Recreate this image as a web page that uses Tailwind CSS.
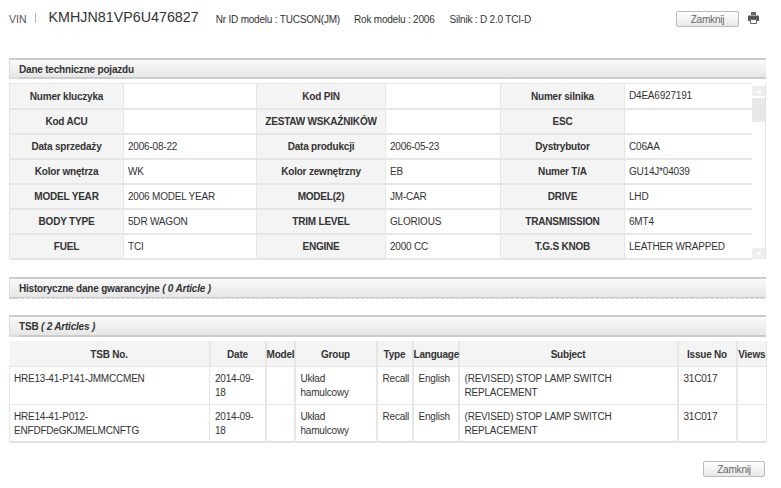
<!DOCTYPE html>
<html lang="en">
  <head>
    <meta charset="UTF-8" />
    <title>Dane techniczne pojazdu</title>
    <script src="https://cdn.jsdelivr.net/npm/@tailwindcss/browser@4"></script>
  </head>
  <body class="bg-white font-['Liberation_Sans',Arial,sans-serif] text-[10px] tracking-[-0.2px] text-[#333] overflow-hidden">
    <div class="w-[781px] h-[488px] pl-[9px] pr-[15px] flex flex-col">
      <!-- top bar -->
      <div class="h-[58px] flex items-start pt-[9px] pr-[5px]">
        <span class="text-[#555] text-[10.500px] tracking-normal mt-[3px]">VIN</span>
        <span class="w-px h-[10px] bg-[#bbb] ml-[8px] mt-[4px]"></span>
        <span class="ml-[13px] text-[14.3px] tracking-normal leading-[17px] text-[#333]">KMHJN81VP6U476827</span>
        <span class="ml-[17px] mt-[3px]">Nr ID modelu : TUCSON(JM)</span>
        <span class="ml-[14px] mt-[3px]">Rok modelu : 2006</span>
        <span class="ml-[15px] mt-[3px]">Silnik : D 2.0 TCI-D</span>
        <button class="ml-auto mt-[2px] w-[63px] h-[16px] border border-[#bbb] bg-gradient-to-b from-white to-[#e8e8e8] rounded-[2px] text-[#666]">Zamknij</button>
        <svg class="ml-[9px] mr-[2px] mt-[3px]" width="11" height="12" viewBox="0 0 11 12">
          <path fill="#666" d="M3 0h5v3H3z" />
          <path fill="#555" d="M1 3.500h9a1 1 0 0 1 1 1V9H9V7H2v2H0V4.500a1 1 0 0 1 1-1z" />
          <path fill="#fff" stroke="#666" d="M2.500 7.500h6v4h-6z" />
        </svg>
      </div>

      <!-- vehicle data -->
      <div class="h-[21px] relative border-t-2 border-b-2 border-l border-t-[#ccc] border-b-[#ccc] border-l-[#ddd] bg-gradient-to-b from-[#fafafa] to-[#e6e6e6] flex items-center pl-[9px] pt-[2px] font-bold">
        Dane techniczne pojazdu
        <span class="absolute left-0 bottom-[-2px] w-[9px] h-[2px] bg-[#ddd]"></span>
      </div>
      <div class="mt-[4px] h-[177px] relative overflow-hidden border-r border-[#e2e2e2]">
        <table class="table-fixed border-collapse w-[743px] border-t border-[#e6e6e6]">
          <colgroup>
            <col class="w-[114px]" /><col class="w-[133px]" /><col class="w-[129px]" /><col class="w-[115px]" /><col class="w-[124px]" /><col class="w-[128px]" />
          </colgroup>
          <tbody>
            <tr class="h-[25px] border-b-2 border-[#e6e6e6]"><th class="bg-[#f4f4f4] border-x border-[#e6e6e6] pt-[1px]">Numer kluczyka</th><td class="pl-[4px]"></td><th class="bg-[#f4f4f4] border-x border-[#e6e6e6] pt-[1px]">Kod PIN</th><td class="pl-[4px]"></td><th class="bg-[#f4f4f4] border-x border-[#e6e6e6] pt-[1px]">Numer silnika</th><td class="pl-[4px]">D4EA6927191</td></tr>
            <tr class="h-[25px] border-b-2 border-[#e6e6e6]"><th class="bg-[#f4f4f4] border-x border-[#e6e6e6] pt-[1px]">Kod ACU</th><td class="pl-[4px]"></td><th class="bg-[#f4f4f4] border-x border-[#e6e6e6] pt-[1px]">ZESTAW WSKAŹNIKÓW</th><td class="pl-[4px]"></td><th class="bg-[#f4f4f4] border-x border-[#e6e6e6] pt-[1px]">ESC</th><td class="pl-[4px]"></td></tr>
            <tr class="h-[25px] border-b-2 border-[#e6e6e6]"><th class="bg-[#f4f4f4] border-x border-[#e6e6e6] pt-[1px]">Data sprzedaży</th><td class="pl-[4px]">2006-08-22</td><th class="bg-[#f4f4f4] border-x border-[#e6e6e6] pt-[1px]">Data produkcji</th><td class="pl-[4px]">2006-05-23</td><th class="bg-[#f4f4f4] border-x border-[#e6e6e6] pt-[1px]">Dystrybutor</th><td class="pl-[4px]">C06AA</td></tr>
            <tr class="h-[25px] border-b-2 border-[#e6e6e6]"><th class="bg-[#f4f4f4] border-x border-[#e6e6e6] pt-[1px]">Kolor wnętrza</th><td class="pl-[4px]">WK</td><th class="bg-[#f4f4f4] border-x border-[#e6e6e6] pt-[1px]">Kolor zewnętrzny</th><td class="pl-[4px]">EB</td><th class="bg-[#f4f4f4] border-x border-[#e6e6e6] pt-[1px]">Numer T/A</th><td class="pl-[4px]">GU14J*04039</td></tr>
            <tr class="h-[25px] border-b-2 border-[#e6e6e6]"><th class="bg-[#f4f4f4] border-x border-[#e6e6e6] pt-[1px]">MODEL YEAR</th><td class="pl-[4px]">2006 MODEL YEAR</td><th class="bg-[#f4f4f4] border-x border-[#e6e6e6] pt-[1px]">MODEL(2)</th><td class="pl-[4px]">JM-CAR</td><th class="bg-[#f4f4f4] border-x border-[#e6e6e6] pt-[1px]">DRIVE</th><td class="pl-[4px]">LHD</td></tr>
            <tr class="h-[25px] border-b-2 border-[#e6e6e6]"><th class="bg-[#f4f4f4] border-x border-[#e6e6e6] pt-[1px]">BODY TYPE</th><td class="pl-[4px]">5DR WAGON</td><th class="bg-[#f4f4f4] border-x border-[#e6e6e6] pt-[1px]">TRIM LEVEL</th><td class="pl-[4px]">GLORIOUS</td><th class="bg-[#f4f4f4] border-x border-[#e6e6e6] pt-[1px]">TRANSMISSION</th><td class="pl-[4px]">6MT4</td></tr>
            <tr class="h-[25px] border-b-2 border-[#e6e6e6]"><th class="bg-[#f4f4f4] border-x border-[#e6e6e6] pt-[1px]">FUEL</th><td class="pl-[4px]">TCI</td><th class="bg-[#f4f4f4] border-x border-[#e6e6e6] pt-[1px]">ENGINE</th><td class="pl-[4px]">2000 CC</td><th class="bg-[#f4f4f4] border-x border-[#e6e6e6] pt-[1px]">T.G.S KNOB</th><td class="pl-[4px]">LEATHER WRAPPED</td></tr>
          </tbody>
        </table>
        <!-- scrollbar -->
        <div class="absolute top-0 right-0 w-[13px] h-full flex flex-col bg-white pt-[3px] pb-[1px]">
          <div class="h-[10px] bg-[#eee] flex items-center justify-center"><span class="border-x-[3px] border-x-transparent border-b-[3px] border-b-white"></span></div>
          <div class="h-[24px] mt-[2px] bg-[#e8e8e8]"></div>
          <div class="mt-auto h-[11px] bg-[#eee] flex items-center justify-center"><span class="border-x-[3px] border-x-transparent border-t-[3px] border-t-white"></span></div>
        </div>
      </div>

      <!-- warranty -->
      <div class="mt-[17px] h-[22px] relative border-t-2 border-b-2 border-l border-t-[#ccc] border-b-[#ccc] border-l-[#ddd] bg-gradient-to-b from-[#fafafa] to-[#e6e6e6] flex items-center pl-[9px] pt-[1px] font-bold">
        Historyczne dane gwarancyjne&nbsp;<i>( 0 Article )</i>
        <span class="absolute left-[9px] right-0 bottom-[-2px] border-b border-dashed border-[#eee]"></span>
      </div>

      <!-- tsb -->
      <div class="mt-[16px] h-[22px] relative border-t-2 border-b-2 border-l border-t-[#ccc] border-b-[#ccc] border-l-[#ddd] bg-gradient-to-b from-[#fafafa] to-[#e6e6e6] flex items-center pl-[9px] pt-[1px] font-bold">
        TSB&nbsp;<i>( 2 Articles )</i>
        <span class="absolute left-0 bottom-[-2px] w-[9px] h-[2px] bg-[#ddd]"></span>
      </div>
      <table class="mt-[4px] table-fixed border-collapse w-[757px] border-b-2 border-[#e0e0e0]">
        <colgroup>
          <col class="w-[200px]" /><col class="w-[56px]" /><col class="w-[29px]" /><col class="w-[82px]" /><col class="w-[36px]" /><col class="w-[46px]" /><col class="w-[219px]" /><col class="w-[59px]" /><col class="w-[30px]" />
        </colgroup>
        <thead>
          <tr class="h-[25px] bg-[#f4f4f4] border-b border-[#e6e6e6] font-bold">
            <th class="border-r-2 border-[#e6e6e6] pt-[3px]">TSB No.</th><th class="border-r-2 border-[#e6e6e6] pt-[3px]">Date</th><th class="border-r-2 border-[#e6e6e6] pt-[3px]">Model</th><th class="border-r-2 border-[#e6e6e6] pt-[3px]">Group</th><th class="border-r-2 border-[#e6e6e6] pt-[3px]">Type</th><th class="border-r-2 border-[#e6e6e6] pt-[3px]">Language</th><th class="border-r-2 border-[#e6e6e6] pt-[3px]">Subject</th><th class="border-r-2 border-[#e6e6e6] pt-[3px]">Issue No</th><th class="border-r border-[#e6e6e6] pt-[3px]">Views</th>
          </tr>
        </thead>
        <tbody class="leading-[14px] align-top">
          <tr class="h-[38px] border-b border-[#e6e6e6]">
            <td class="border-x border-[#e6e6e6] px-[4px] pt-[5px]">HRE13-41-P141-JMMCCMEN</td><td class="border-r-2 border-[#e6e6e6] pl-[5px] pr-[3px] pt-[5px]">2014-09-18</td><td class="border-r-2 border-[#e6e6e6]"></td><td class="border-r-2 border-[#e6e6e6] pl-[5px] pr-[3px] pt-[5px]">Układ hamulcowy</td><td class="border-r-2 border-[#e6e6e6] pl-[5px] pr-[3px] pt-[5px]">Recall</td><td class="border-r-2 border-[#e6e6e6] pl-[5px] pr-[3px] pt-[5px]">English</td><td class="border-r-2 border-[#e6e6e6] pl-[5px] pr-[3px] pt-[5px]">(REVISED) STOP LAMP SWITCH REPLACEMENT</td><td class="border-r-2 border-[#e6e6e6] pl-[5px] pr-[3px] pt-[5px]">31C017</td><td class="border-r border-[#e6e6e6]"></td>
          </tr>
          <tr class="h-[38px]">
            <td class="border-x border-[#e6e6e6] px-[4px] pt-[5px]">HRE14-41-P012-<br />ENFDFDeGKJMELMCNFTG</td><td class="border-r-2 border-[#e6e6e6] pl-[5px] pr-[3px] pt-[5px]">2014-09-18</td><td class="border-r-2 border-[#e6e6e6]"></td><td class="border-r-2 border-[#e6e6e6] pl-[5px] pr-[3px] pt-[5px]">Układ hamulcowy</td><td class="border-r-2 border-[#e6e6e6] pl-[5px] pr-[3px] pt-[5px]">Recall</td><td class="border-r-2 border-[#e6e6e6] pl-[5px] pr-[3px] pt-[5px]">English</td><td class="border-r-2 border-[#e6e6e6] pl-[5px] pr-[3px] pt-[5px]">(REVISED) STOP LAMP SWITCH REPLACEMENT</td><td class="border-r-2 border-[#e6e6e6] pl-[5px] pr-[3px] pt-[5px]">31C017</td><td class="border-r border-[#e6e6e6]"></td>
          </tr>
        </tbody>
      </table>
      <div class="mt-[18px] pr-[1px] flex justify-end">
        <button class="w-[62px] h-[16px] border border-[#bbb] bg-gradient-to-b from-white to-[#e8e8e8] rounded-[2px] text-[#666]">Zamknij</button>
      </div>
    </div>
  </body>
</html>
